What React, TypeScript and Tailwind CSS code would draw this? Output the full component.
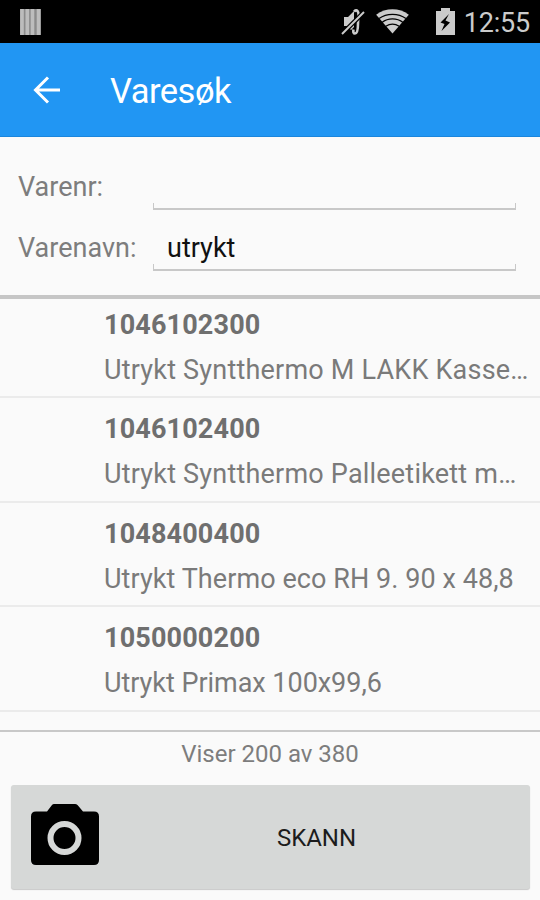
interface Item { nr: string; name: string; tracking: string; }

const items: Item[] = [
  { nr: "1046102300", name: "Utrykt Syntthermo M LAKK Kasse…", tracking: "tracking-[0.2px]" },
  { nr: "1046102400", name: "Utrykt Syntthermo Palleetikett m…", tracking: "tracking-[0.2px]" },
  { nr: "1048400400", name: "Utrykt Thermo eco RH 9. 90 x 48,8", tracking: "tracking-[0.07px]" },
  { nr: "1050000200", name: "Utrykt Primax 100x99,6", tracking: "tracking-[-0.04px]" },
];

function StatusBar() {
  return (
    <div className="h-[43px] shrink-0 bg-black flex items-center pl-5 pr-[10px] text-[#cbcbcb]">
      <svg className="w-[21px] h-[26px]" viewBox="0 0 21 26">
        <rect width="21" height="26" fill="#8c8c8c" />
        <path d="M2 0v26M7.300 0v26M12.500 0v26M18.500 0v26" stroke="#bdbdbd" strokeWidth="3.600" />
      </svg>
      <svg className="ml-auto mt-px w-6 h-[26px]" viewBox="0 0 24 26" fill="none" stroke="currentColor">
        <path d="M3 8h4l6-6v16l-3 3-4-4H3z" fill="currentColor" stroke="none" />
        <path d="M13 2.500c3-2.500 5 0 4.500 5-.3 3-.5 4-.5 7 0 6-1 10-3 10-1.500 0-2-1.500-1.500-4" strokeWidth="2.600" />
        <path d="M23 3L1 25" stroke="#000" strokeWidth="4.500" />
        <path d="M23 3L1 25" strokeWidth="2" />
      </svg>
      <svg className="ml-[11px] w-[33px] h-[25px]" viewBox="0 0 34 26">
        <path d="M0 6C10-1.500 24-1.500 34 6L17 25.500z" fill="currentColor" />
        <path d="M3 10C11 4 23 4 31 10M6 14c6.500-5 15.500-5 22 0M10 18c4.500-3 9.500-3 14 0" fill="none" stroke="#000" strokeWidth="1.300" />
      </svg>
      <svg className="ml-[27px] w-[19px] h-[27px]" viewBox="0 0 19 27">
        <path d="M0 3h5V0h9v3h5v24H0z" fill="currentColor" />
        <path d="M13 6L4.500 14.500l4 1.500-3 7 8.500-8.500-4.500-2z" fill="#000" />
      </svg>
      <span className="ml-[9px] mt-[3px] text-[27px] leading-none tracking-[-0.2px]">12:55</span>
    </div>
  );
}

function Field({ label, value }: { label: string; value: string }) {
  return (
    <label className="flex h-[61px] items-center">
      <span className="w-[135px] pt-4 text-[27px] text-[#7d7d7d]">{label}</span>
      <span className="relative flex h-full w-[363px] items-center pl-[14px] pt-4 text-[27px] text-[#111]">
        {value}
        <span className="absolute inset-x-0 bottom-0 h-[7px] border-x border-b-2 border-[#c8c8c8]" />
      </span>
    </label>
  );
}

export default function App() {
  return (
    <div className="flex h-[900px] w-[540px] flex-col overflow-hidden bg-[#fafafa] font-['Roboto',sans-serif]">
      <StatusBar />
      <header className="flex h-[94px] shrink-0 items-center bg-[#2196f3] pl-[33px] text-white border-b border-[#1b86dc]">
        <svg className="w-7 h-7" viewBox="0 0 28 28" fill="none" stroke="currentColor" strokeWidth="3">
          <path d="M27 14H3M15 1.500L2.500 14 15 26.500" />
        </svg>
        <h1 className="ml-[49px] pt-[5px] text-[34.5px] tracking-[-0.5px]">Varesøk</h1>
      </header>

      <section className="h-[158px] shrink-0 pl-[18px] pt-3">
        <Field label="Varenr:" value="" />
        <Field label="Varenavn:" value="utrykt" />
      </section>

      <main className="flex h-[435px] shrink-0 flex-col justify-start overflow-hidden border-t-4 border-[#c6c6c6]">
        <ul className="-mt-[5.5px]">
          {items.map((item) => (
            <li key={item.nr} className="h-[104.5px] border-b-2 border-[#ebebeb] pl-[104px] pt-[15px] whitespace-nowrap text-[#6f6f6f]">
              <p className="text-[27px] leading-[32px] font-bold tracking-[0.15px]">{item.nr}</p>
              <p className={`mt-[13px] text-[27px] leading-[32px] text-[#7a7a7a] ${item.tracking}`}>{item.name}</p>
            </li>
          ))}
        </ul>
      </main>

      <footer className="flex grow flex-col border-t-2 border-[#c8c8c8]">
        <p className="h-[53px] text-center text-[24px] leading-[45px] text-[#7d7d7d]">Viser 200 av 380</p>
        <button className="relative mx-[10.5px] flex h-[104px] items-center rounded-[3px] bg-[#d6d8d7] pl-5 shadow-[0_1px_1px_#c8c8c8]">
          <svg className="mb-[6px] w-[68px] h-[61px]" viewBox="0 0 68 61">
            <path d="M23 0h21q1.500 0 2.500 1l5.500 6.500h11q5 0 5 5V56q0 5-5 5H5q-5 0-5-5V12.500q0-5 5-5h11L21 1q.8-1 2-1z" />
            <circle cx="33.500" cy="34" r="14" fill="none" stroke="#d6d8d7" strokeWidth="6" />
          </svg>
          <span className="absolute inset-x-0 pl-[93px] pt-px text-center text-[24px] text-[#1c1c1c]">SKANN</span>
        </button>
      </footer>
    </div>
  );
}
